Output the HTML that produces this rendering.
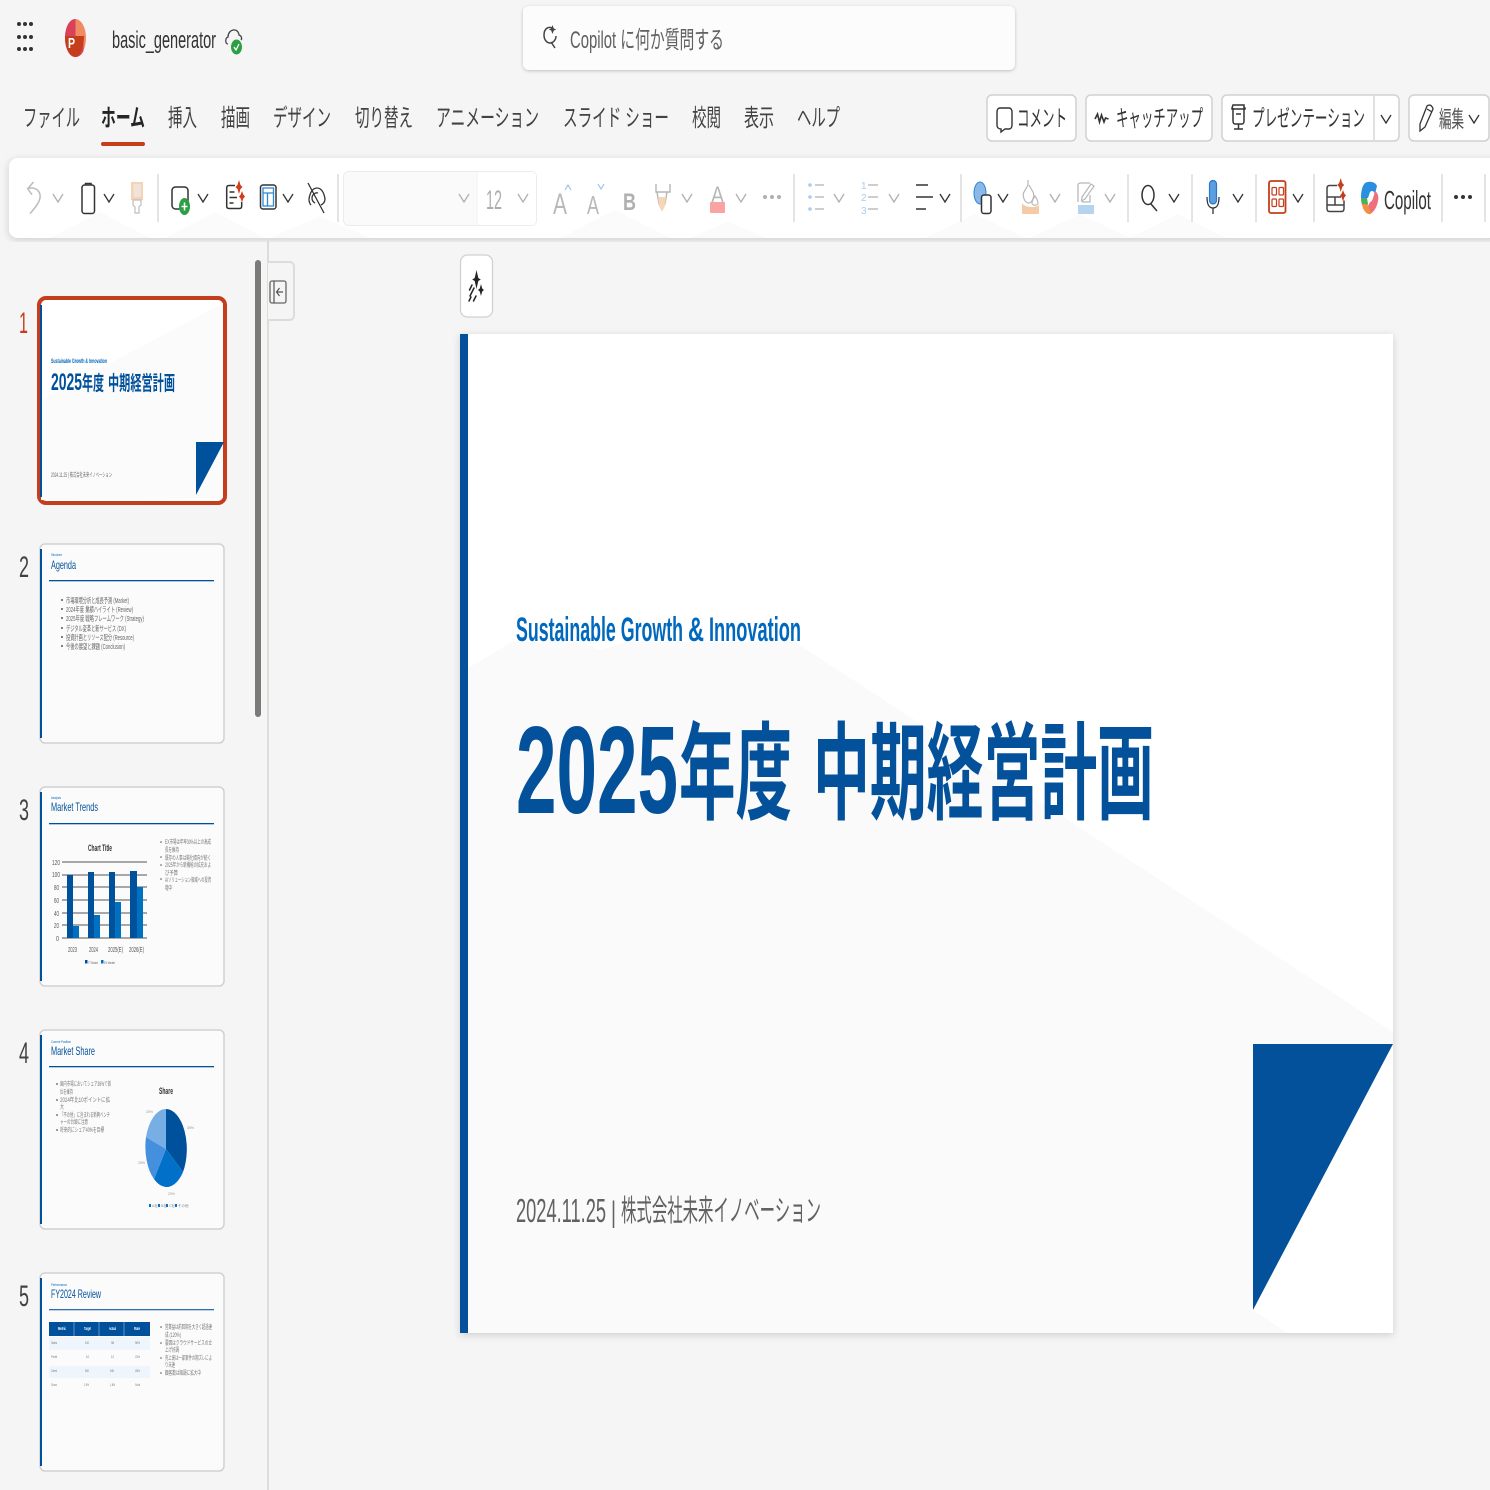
<!DOCTYPE html>
<html lang="ja"><head><meta charset="utf-8"><title>basic_generator</title>
<style>
html,body{margin:0;padding:0;background:#f5f5f5;width:1490px;height:1490px;overflow:hidden}
svg{display:block}
text{font-family:"Liberation Sans","Noto Sans CJK JP",sans-serif}
</style></head><body>
<svg xmlns="http://www.w3.org/2000/svg" width="1490" height="1490" viewBox="0 0 1490 1490">
<defs>
<filter id="sh" x="-5%" y="-5%" width="110%" height="110%"><feDropShadow dx="0" dy="2" stdDeviation="4" flood-color="#000" flood-opacity=".16"/></filter>
<filter id="sh2" x="-5%" y="-30%" width="110%" height="160%"><feDropShadow dx="0" dy="1" stdDeviation="1.5" flood-color="#000" flood-opacity=".22"/></filter>
<filter id="b" filterUnits="userSpaceOnUse" x="0" y="285" width="250" height="1205"><feGaussianBlur stdDeviation=".3"/></filter>
<polyline id="c" points="0,-4 5,4 10,-4" fill="none" stroke-width="1.300"/>
</defs>
<rect width="1490" height="1490" fill="#f5f5f5"/>

<!-- top bar -->
<g fill="#333"><circle cx="19" cy="24" r="2"/><circle cx="25" cy="24" r="2"/><circle cx="31" cy="24" r="2"/><circle cx="19" cy="37" r="2"/><circle cx="25" cy="37" r="2"/><circle cx="31" cy="37" r="2"/><circle cx="19" cy="49" r="2"/><circle cx="25" cy="49" r="2"/><circle cx="31" cy="49" r="2"/></g>
<ellipse cx="75.500" cy="38" rx="10.500" ry="19" fill="#ef8a62"/>
<path d="M75.500 19C69 19 65 28 65 38c0 10 4 19 10.500 19 3.500 0 6-2 8-6V38H75.500z" fill="#d9405a"/>
<path d="M65 36h19c0 8-3 21-8.500 21C69 57 65 47 65 36z" fill="#c43e1c"/>
<text x="68" y="48" font-size="15" font-weight="700" fill="#fff" textLength="7" lengthAdjust="spacingAndGlyphs">P</text>
<text x="112" y="48" font-size="24" fill="#333" textLength="104" lengthAdjust="spacingAndGlyphs">basic_generator</text>
<path d="M228 44c-3 0-3-6 0-7 0-8 10-10 11-2 3 1 3 4 2 5" fill="none" stroke="#444" stroke-width="1.300"/>
<ellipse cx="236.500" cy="47" rx="5.500" ry="7.500" fill="#2e9e44"/><path d="M234 47l2 3 3-6" fill="none" stroke="#fff" stroke-width="1.300"/>

<rect x="523" y="6" width="492" height="64" rx="6" fill="#fcfcfc" filter="url(#sh2)"/>
<path d="M552 28c-4-2-8 1-8 7 0 5 3 8 6 8 3 0 6-3 6-7M551 42l4 6" fill="none" stroke="#444" stroke-width="1.500"/>
<path d="M552.500 25l1.300 3.500 2.500 1-2.500 1-1.300 3.500-1.300-3.500-2.500-1 2.500-1z" fill="#444"/>
<text x="570" y="48" font-size="24" fill="#616161" textLength="154" lengthAdjust="spacingAndGlyphs">Copilot に何か質問する</text>

<!-- tabs -->
<g font-size="24" fill="#424242">
<text x="23" y="126" textLength="57" lengthAdjust="spacingAndGlyphs">ファイル</text>
<text x="101" y="126" font-weight="700" fill="#242424" textLength="44" lengthAdjust="spacingAndGlyphs">ホーム</text>
<text x="168" y="126" textLength="29" lengthAdjust="spacingAndGlyphs">挿入</text>
<text x="221" y="126" textLength="29" lengthAdjust="spacingAndGlyphs">描画</text>
<text x="273" y="126" textLength="58" lengthAdjust="spacingAndGlyphs">デザイン</text>
<text x="355" y="126" textLength="58" lengthAdjust="spacingAndGlyphs">切り替え</text>
<text x="436" y="126" textLength="103" lengthAdjust="spacingAndGlyphs">アニメーション</text>
<text x="563" y="126" textLength="106" lengthAdjust="spacingAndGlyphs">スライド ショー</text>
<text x="692" y="126" textLength="29" lengthAdjust="spacingAndGlyphs">校閲</text>
<text x="744" y="126" textLength="30" lengthAdjust="spacingAndGlyphs">表示</text>
<text x="797" y="126" textLength="43" lengthAdjust="spacingAndGlyphs">ヘルプ</text>
</g>
<rect x="101" y="142" width="44" height="4" rx="2" fill="#c43e1c"/>

<!-- right buttons -->
<g fill="#fff" stroke="#d1d1d1" stroke-width="1.500">
<rect x="987" y="95" width="89" height="46" rx="5"/>
<rect x="1086" y="95" width="126" height="46" rx="5"/>
<rect x="1222" y="95" width="177" height="46" rx="5"/>
<rect x="1409" y="95" width="80" height="46" rx="5"/>
</g>
<line x1="1374" y1="96" x2="1374" y2="140" stroke="#d1d1d1" stroke-width="1.300"/>
<path d="M1000 108h9c2 0 3 2 3 4v13c0 2-1 4-3 4h-4l-4 3v-3c-2 0-4-1-4-4v-13c0-2 1-4 3-4z" fill="none" stroke="#333" stroke-width="1.400"/>
<text x="1017" y="126" font-size="23" fill="#333" textLength="50" lengthAdjust="spacingAndGlyphs">コメント</text>
<path d="M1095 119l2.500-5 2 8 2-7 2.500 7 1.500-4 3 1" fill="none" stroke="#333" stroke-width="1.600"/>
<text x="1116" y="126" font-size="23" fill="#333" textLength="87" lengthAdjust="spacingAndGlyphs">キャッチアップ</text>
<path d="M1233 105h11v3h1v1h-13v-1zM1233 108v13c0 2 1 3 2 3h7c1 0 2-1 2-3v-13M1238.500 124v5M1234 129h9M1236 114h5" fill="none" stroke="#333" stroke-width="1.500"/>
<text x="1252" y="126" font-size="23" fill="#333" textLength="113" lengthAdjust="spacingAndGlyphs">プレゼンテーション</text>
<use href="#c" x="1381" y="119" stroke="#333"/>
<path d="M1430 105c2 1 3 3 3 4l-8 18-5 4 0-7 7-18c1-1 2-1 3-1zM1427 109l5 3" fill="none" stroke="#333" stroke-width="1.300"/>
<text x="1439" y="127" font-size="23" fill="#555" textLength="25" lengthAdjust="spacingAndGlyphs">編集</text>
<use href="#c" x="1469" y="119" stroke="#333"/>

<!-- ribbon -->
<rect x="9" y="158" width="1495" height="80" rx="9" fill="#fff" filter="url(#sh)"/>
<g fill="#fbfbfb">
<path d="M50 238l50-26 50 26zM165 238l50-26 50 26zM270 238l50-22 50 22zM560 238l55-28 55 28zM690 238l38-16 38 16zM925 238l50-24 50 24zM1030 238l50-24 50 24zM1130 238l48-24 48 24z"/>
</g>
<g stroke="#d6d6d6" stroke-width="1.300">
<line x1="158" y1="174" x2="158" y2="222"/><line x1="338" y1="174" x2="338" y2="222"/><line x1="794" y1="174" x2="794" y2="222"/><line x1="961" y1="174" x2="961" y2="222"/><line x1="1128" y1="174" x2="1128" y2="222"/><line x1="1192" y1="174" x2="1192" y2="222"/><line x1="1256" y1="174" x2="1256" y2="222"/><line x1="1314" y1="174" x2="1314" y2="222"/><line x1="1442" y1="174" x2="1442" y2="222"/><line x1="1485" y1="174" x2="1485" y2="222"/>
</g>
<g stroke="#b0b0b0"><use href="#c" x="53" y="198"/><use href="#c" x="682" y="198"/><use href="#c" x="736" y="198"/><use href="#c" x="834" y="198"/><use href="#c" x="889" y="198"/><use href="#c" x="1050" y="198"/><use href="#c" x="1105" y="198"/></g>
<g stroke="#333"><use href="#c" x="104" y="198"/><use href="#c" x="198" y="198"/><use href="#c" x="283" y="198"/><use href="#c" x="940" y="198"/><use href="#c" x="998" y="198"/><use href="#c" x="1169" y="198"/><use href="#c" x="1233" y="198"/><use href="#c" x="1293" y="198"/></g>

<!-- undo -->
<path d="M33.500 182L27.700 188.700L32 194.700M27.700 188.700C36 186 41 192 40 198C39 204 33 210 30 213.700" fill="none" stroke="#bdbdbd" stroke-width="1.500"/>
<!-- clipboard -->
<rect x="82" y="185" width="12.500" height="28.500" rx="2.500" fill="none" stroke="#333" stroke-width="1.500"/>
<path d="M85.500 185v-1.500h5.500v1.500" fill="none" stroke="#333" stroke-width="1.500"/>
<!-- brush -->
<rect x="131" y="182" width="12" height="18" fill="#f5d3b3"/><rect x="133.500" y="184" width="7.500" height="13" fill="#eee4dc"/>
<path d="M133 200h8v5l-2 2v6h-4v-6l-2-2z" fill="#fff" stroke="#bdbdbd" stroke-width="1.200"/>
<!-- new slide -->
<rect x="172" y="187" width="16" height="22" rx="3.500" fill="none" stroke="#333" stroke-width="1.500"/>
<ellipse cx="184.500" cy="206.500" rx="5.500" ry="8.500" fill="#2e9e44"/><path d="M184.500 202.500v8M181.500 206.500h6" stroke="#fff" stroke-width="1.500"/>
<!-- design -->
<path d="M235 185.500h-6c-1.500 0-2.300 1-2.300 2.500v18c0 1.500.8 2.500 2.300 2.500h10.500c1.500 0 2.200-1 2.200-2.500v-4M229.500 192h5M229.500 197.500h7.500M229.500 203h4" fill="none" stroke="#333" stroke-width="1.500"/>
<path d="M239 180l1.500 5 2 2-2 2-1.500 5-1.500-5-2-2 2-2zM242 191l1.300 3.500 1.700 2-1.700 2-1.300 4-1.300-4-1.700-2 1.700-2z" fill="#d13c1c"/>
<!-- layout -->
<rect x="260.500" y="185" width="15.500" height="24" rx="2.500" fill="none" stroke="#333" stroke-width="1.500"/>
<path d="M263 188h10.500v18h-10.500zM263 193h10.500M267.500 193v13" fill="none" stroke="#2b88d8" stroke-width="1.300"/>
<!-- hide -->
<path d="M309 199c1-7 4-11 8-11s7 4 8 11c0 3-2 5-4 6M311 205c-1-1-2-3-2-6M318 193c-3-1-6 2-6 5 0 2 1 4 3 5" fill="none" stroke="#333" stroke-width="1.300"/><line x1="308" y1="183" x2="324" y2="213" stroke="#333" stroke-width="1.300"/>

<!-- font box -->
<rect x="343.500" y="171.500" width="193" height="54" rx="5" fill="#fafafa" stroke="#ececec"/>
<rect x="477" y="172" width="59" height="53" rx="4" fill="#fff"/><line x1="477" y1="172" x2="477" y2="225" stroke="#f1f1f1"/>
<text x="486" y="209" font-size="27" fill="#adadad" textLength="16" lengthAdjust="spacingAndGlyphs">12</text>
<use href="#c" x="459" y="198" stroke="#b0b0b0"/>
<use href="#c" x="518" y="198" stroke="#b0b0b0"/>
<text x="553" y="214" font-size="30" fill="#b8b8b8" textLength="14" lengthAdjust="spacingAndGlyphs">A</text>
<path d="M565 190l3-5 3 5" fill="none" stroke="#9cc4ea" stroke-width="1.200"/>
<text x="587" y="214" font-size="26" fill="#b8b8b8" textLength="12" lengthAdjust="spacingAndGlyphs">A</text>
<path d="M598 184l3 5 3-5" fill="none" stroke="#9cc4ea" stroke-width="1.200"/>
<text x="623" y="210" font-size="24" font-weight="700" fill="#b0b0b0" textLength="13" lengthAdjust="spacingAndGlyphs">B</text>
<path d="M656 184v8h14v-8M657 192l2 12h6l2-12" fill="none" stroke="#b5b5b5" stroke-width="1.400"/>
<path d="M658 197h8l-1 9-3 6-3-6z" fill="#f6d6b8"/>
<text x="711" y="203" font-size="24" fill="#b8b8b8" textLength="13" lengthAdjust="spacingAndGlyphs">A</text>
<rect x="710" y="202" width="15" height="11" rx="1" fill="#f9a3a3"/>
<g fill="#b0b0b0"><circle cx="765" cy="197" r="2"/><circle cx="772" cy="197" r="2"/><circle cx="779" cy="197" r="2"/></g>

<!-- lists -->
<g fill="#a9cdf0"><circle cx="810" cy="185" r="1.800"/><circle cx="810" cy="197" r="1.800"/><circle cx="810" cy="209" r="1.800"/></g>
<path d="M815 185h9M815 197h9M815 209h9" stroke="#bdbdbd" stroke-width="1.500"/>
<text x="861" y="189" font-size="10" fill="#a9cdf0">1</text><text x="861" y="201" font-size="10" fill="#a9cdf0">2</text><text x="861" y="214" font-size="10" fill="#a9cdf0">3</text>
<path d="M868 185h10M868 197h10M868 209h10" stroke="#bdbdbd" stroke-width="1.500"/>
<path d="M916 185h12M916 197h17M916 209h10" stroke="#333" stroke-width="1.500"/>

<!-- shapes -->
<ellipse cx="980" cy="193" rx="6" ry="11" fill="#8ab8e8" stroke="#2b88d8" stroke-width="1"/>
<rect x="981.500" y="195" width="9.500" height="18.500" rx="2.500" fill="#fff" stroke="#333" stroke-width="1.500"/>
<!-- fill -->
<path d="M1028 180v5l-4.500 8c-1 5 2 10 5 10s6-5 5-10l-4.500-8M1035 196c-2 3-3 5-3 7 0 3 6 3 6 0 0-2-1-4-3-7z" fill="none" stroke="#b8b8b8" stroke-width="1.200"/>
<path d="M1022 203c3 5 14 5 17 2v8c0 1-1 1-2 1h-13c-1 0-2 0-2-1z" fill="#f5cba7"/>
<!-- outline -->
<path d="M1090 183h-10c-1 0-2 1-2 2v17M1090 195v7h-8" fill="none" stroke="#b8b8b8" stroke-width="1.300"/><path d="M1091 184l3 2-9 13-3.500 2 .5-4z" fill="none" stroke="#b8b8b8" stroke-width="1.200"/>
<rect x="1078" y="205" width="16" height="9" fill="#b6d3ef"/>
<!-- search -->
<ellipse cx="1148" cy="195" rx="6" ry="9.500" fill="none" stroke="#333" stroke-width="1.500"/><line x1="1151" y1="204" x2="1157" y2="211" stroke="#333" stroke-width="1.500"/>
<!-- mic -->
<rect x="1209.500" y="180.500" width="7" height="23.500" rx="3.500" fill="#5b9fe0" stroke="#2b78c8" stroke-width="1.200"/>
<path d="M1207 197c0 8 2 11 6 11s6-3 6-11M1213 208v6" fill="none" stroke="#333" stroke-width="1.300"/>
<!-- red grid -->
<rect x="1269" y="181" width="16.500" height="32" rx="2" fill="none" stroke="#c43e1c" stroke-width="1.800"/>
<g fill="none" stroke="#c43e1c" stroke-width="1.200"><rect x="1272" y="187.500" width="4.500" height="7.500" rx="1"/><rect x="1279" y="187.500" width="4.500" height="7.500" rx="1"/><rect x="1272" y="199" width="4.500" height="7.500" rx="1"/><rect x="1279" y="199" width="4.500" height="7.500" rx="1"/></g>
<!-- designer -->
<path d="M1337 185.500h-7.500c-1.500 0-2.500 1-2.500 3v20c0 2 1 3 2.500 3h12c1.500 0 2.500-1 2.500-3v-8M1327 197h14M1335 197v8M1327 205h17" fill="none" stroke="#444" stroke-width="1.500"/>
<path d="M1340.700 178l1.500 5 2 2-2 2-1.500 5-1.500-5-2-2 2-2zM1343 190l1.300 3.500 1.700 2-1.700 2-1.300 4-1.300-4-1.700-2 1.700-2z" fill="#c43e1c"/>
<!-- copilot logo -->
<path d="M1365 183c3-2 10-2 12 3l-2 8c-1-3-3-4-5-2l-2 6h-7c0-6 1-12 4-15z" fill="#2b8fe0"/>
<path d="M1361 198h6l1 6-2 6c-3-2-5-6-5-12z" fill="#4eae5a"/>
<path d="M1375 191c3 2 4 6 3 10-1 6-4 11-8 13l-4-4 4-8c2 0 3-3 5-11z" fill="#ef6f7c"/>
<path d="M1362 204l4 0 3 3 2 7c-4 1-8-3-9-10z" fill="#f4903c"/>
<text x="1384" y="209" font-size="26" fill="#333" textLength="47" lengthAdjust="spacingAndGlyphs">Copilot</text>
<g fill="#333"><circle cx="1456" cy="197" r="2"/><circle cx="1463" cy="197" r="2"/><circle cx="1470" cy="197" r="2"/></g>

<!-- panel dividers -->
<line x1="268" y1="238" x2="268" y2="1490" stroke="#dcdcdc" stroke-width="2"/>
<rect x="255" y="260" width="6" height="457" rx="3" fill="#7c7a78"/>
<path d="M268 262h21c3 0 5 2 5 5v48c0 3-2 5-5 5h-21" fill="#f5f5f5" stroke="#dcdcdc" stroke-width="2"/>
<rect x="270" y="281" width="16" height="22" rx="2" fill="none" stroke="#666" stroke-width="1.300"/>
<path d="M274 281v22M283 292h-6M279.500 288l-3 4 3 4" fill="none" stroke="#555" stroke-width="1.200"/>

<!-- sparkle button -->
<rect x="460.500" y="255" width="32" height="62" rx="7" fill="#fff" stroke="#d1d1d1" stroke-width="1.300"/>
<path d="M476.500 270l1.800 8 2.500 1.500-2.500 1.500-1.800 8-1.800-8-2.500-1.500 2.500-1.500zM481 284l1.200 4.500 1.800 1.500-1.800 1.500-1.200 4.500-1.200-4.500-1.800-1.500 1.800-1.500z" fill="#242424"/>
<path d="M472 285l-2.500 5M474 288l-4 8M471 297l-2 4M476 296l-2.500 5" stroke="#242424" stroke-width="1.500" stroke-linecap="round"/>

<!-- main slide -->
<rect x="460" y="334" width="933" height="999" fill="#fff" filter="url(#sh)"/>
<path d="M468 668L512 642L580 642L600 650L625 642L795 642L1393 1032V1044H1253V1310L1287 1333H468z" fill="#fafafa"/>
<path d="M1253 1044H1393L1253 1310z" fill="#03519b"/>
<rect x="460" y="334" width="8" height="999" fill="#03519b"/>
<g font-size="34" font-weight="700" fill="#0068bd">
<text x="516" y="641" textLength="167" lengthAdjust="spacingAndGlyphs">Sustainable Growth</text>
<text x="688" y="641" textLength="16" lengthAdjust="spacingAndGlyphs">&amp;</text>
<text x="709" y="641" textLength="92" lengthAdjust="spacingAndGlyphs">Innovation</text>
</g>
<g font-weight="700" fill="#03519b">
<text x="516" y="813" font-size="124" textLength="162" lengthAdjust="spacingAndGlyphs">2025</text>
<text x="679" y="811" font-size="106" textLength="113" lengthAdjust="spacingAndGlyphs">年度</text>
<text x="813" y="811" font-size="106" textLength="341" lengthAdjust="spacingAndGlyphs">中期経営計画</text>
</g>
<g fill="#616161">
<text x="516" y="1222" font-size="33" textLength="90" lengthAdjust="spacingAndGlyphs">2024.11.25</text>
<text x="611" y="1222" font-size="30" textLength="5" lengthAdjust="spacingAndGlyphs">|</text>
<text x="621" y="1221" font-size="30" textLength="200" lengthAdjust="spacingAndGlyphs">株式会社未来イノベーション</text>
</g>

<!-- numbers -->
<g font-size="30" fill="#424242">
<text x="19" y="333" fill="#c43e1c" textLength="9" lengthAdjust="spacingAndGlyphs">1</text>
<text x="19" y="577" textLength="10" lengthAdjust="spacingAndGlyphs">2</text>
<text x="19" y="820" textLength="10" lengthAdjust="spacingAndGlyphs">3</text>
<text x="19" y="1063" textLength="10" lengthAdjust="spacingAndGlyphs">4</text>
<text x="19" y="1306" textLength="10" lengthAdjust="spacingAndGlyphs">5</text>
</g>

<g filter="url(#b)">
<!-- thumb 1 -->
<rect x="39" y="298" width="186" height="205" rx="7" fill="#fff" stroke="#c43e1c" stroke-width="4"/>
<path d="M41 400L223 303V498L41 500z" fill="#fbfbfb"/>
<rect x="40" y="305" width="2" height="192" fill="#03519b"/>
<path d="M196 442H224L196 495z" fill="#03519b"/>
<text x="51" y="363" font-size="6.500" font-weight="700" fill="#0068bd" textLength="56" lengthAdjust="spacingAndGlyphs">Sustainable Growth &amp; Innovation</text>
<g font-weight="700" fill="#03519b">
<text x="51" y="390" font-size="24" textLength="31" lengthAdjust="spacingAndGlyphs">2025</text>
<text x="82" y="390" font-size="20" textLength="22" lengthAdjust="spacingAndGlyphs">年度</text>
<text x="108" y="390" font-size="20" textLength="67" lengthAdjust="spacingAndGlyphs">中期経営計画</text>
</g>
<text x="51" y="477" font-size="6" fill="#666" textLength="61" lengthAdjust="spacingAndGlyphs">2024.11.25 | 株式会社未来イノベーション</text>

<!-- thumb 2 -->
<rect x="40" y="544" width="184" height="199" rx="5" fill="#fbfbfb" stroke="#d1d1d1" stroke-width="1.500"/>
<rect x="40" y="549" width="2" height="189" fill="#03519b"/>
<text x="51" y="556" font-size="4" fill="#0068bd" textLength="11" lengthAdjust="spacingAndGlyphs">Structure</text>
<text x="51" y="569" font-size="12" fill="#03519b" textLength="25" lengthAdjust="spacingAndGlyphs">Agenda</text>
<rect x="49" y="580" width="165" height="1.300" fill="#03519b"/>
<g fill="#555"><circle cx="62" cy="600" r="1"/><circle cx="62" cy="609" r="1"/><circle cx="62" cy="618" r="1"/><circle cx="62" cy="628" r="1"/><circle cx="62" cy="637" r="1"/><circle cx="62" cy="646" r="1"/></g>
<g font-size="7.500" fill="#666">
<text x="66" y="603" textLength="63" lengthAdjust="spacingAndGlyphs">市場環境分析と成長予測 (Market)</text>
<text x="66" y="612" textLength="67" lengthAdjust="spacingAndGlyphs">2024年度 業績ハイライト (Review)</text>
<text x="66" y="621" textLength="78" lengthAdjust="spacingAndGlyphs">2025年度 戦略フレームワーク (Strategy)</text>
<text x="66" y="631" textLength="60" lengthAdjust="spacingAndGlyphs">デジタル変革と新サービス (DX)</text>
<text x="66" y="640" textLength="68" lengthAdjust="spacingAndGlyphs">投資計画とリソース配分 (Resource)</text>
<text x="66" y="649" textLength="59" lengthAdjust="spacingAndGlyphs">今後の展望と課題 (Conclusion)</text>
</g>

<!-- thumb 3 -->
<rect x="40" y="787" width="184" height="199" rx="5" fill="#fbfbfb" stroke="#d1d1d1" stroke-width="1.500"/>
<rect x="40" y="792" width="2" height="189" fill="#03519b"/>
<text x="51" y="799" font-size="4" fill="#0068bd" textLength="10" lengthAdjust="spacingAndGlyphs">Analysis</text>
<text x="51" y="811" font-size="12" fill="#03519b" textLength="47" lengthAdjust="spacingAndGlyphs">Market Trends</text>
<rect x="49" y="823" width="165" height="1.300" fill="#03519b"/>
<text x="88" y="851" font-size="9" font-weight="700" fill="#333" textLength="24" lengthAdjust="spacingAndGlyphs">Chart Title</text>
<g stroke="#555" stroke-width=".9"><line x1="62" y1="862" x2="147" y2="862"/><line x1="62" y1="875" x2="147" y2="875"/><line x1="62" y1="887" x2="147" y2="887"/><line x1="62" y1="900" x2="147" y2="900"/><line x1="62" y1="913" x2="147" y2="913"/><line x1="62" y1="925" x2="147" y2="925"/><line x1="62" y1="938" x2="147" y2="938"/></g>
<g fill="#03519b"><rect x="67" y="875" width="6" height="63"/><rect x="88" y="872" width="6" height="66"/><rect x="109" y="872" width="6" height="66"/><rect x="130" y="871" width="7" height="67"/></g>
<g fill="#0070c0"><rect x="73" y="926" width="6" height="12"/><rect x="94" y="915" width="6" height="23"/><rect x="115" y="902" width="6" height="36"/><rect x="137" y="887" width="6" height="51"/></g>
<g font-size="7" fill="#555">
<text x="52" y="865" textLength="8" lengthAdjust="spacingAndGlyphs">120</text><text x="52" y="877" textLength="8" lengthAdjust="spacingAndGlyphs">100</text><text x="54" y="890" textLength="5" lengthAdjust="spacingAndGlyphs">80</text><text x="54" y="903" textLength="5" lengthAdjust="spacingAndGlyphs">60</text><text x="54" y="916" textLength="5" lengthAdjust="spacingAndGlyphs">40</text><text x="54" y="928" textLength="5" lengthAdjust="spacingAndGlyphs">20</text><text x="56" y="941" textLength="3" lengthAdjust="spacingAndGlyphs">0</text>
<text x="68" y="952" textLength="9" lengthAdjust="spacingAndGlyphs">2023</text><text x="89" y="952" textLength="9" lengthAdjust="spacingAndGlyphs">2024</text><text x="108" y="952" textLength="15" lengthAdjust="spacingAndGlyphs">2025(E)</text><text x="129" y="952" textLength="15" lengthAdjust="spacingAndGlyphs">2026(E)</text>
</g>
<rect x="85" y="960" width="2.500" height="3.500" fill="#03519b"/><rect x="101" y="960" width="2.500" height="3.500" fill="#0070c0"/>
<text x="88" y="964" font-size="3.500" fill="#666" textLength="10" lengthAdjust="spacingAndGlyphs">TT Market</text><text x="104" y="964" font-size="3.500" fill="#666" textLength="11" lengthAdjust="spacingAndGlyphs">EX Market</text>
<g fill="#555"><circle cx="161" cy="842" r=".8"/><circle cx="161" cy="857" r=".8"/><circle cx="161" cy="865" r=".8"/><circle cx="161" cy="879" r=".8"/></g>
<g font-size="6" fill="#777">
<text x="165" y="844" textLength="46" lengthAdjust="spacingAndGlyphs">EX市場は年率30%以上の高成</text>
<text x="165" y="852" textLength="14" lengthAdjust="spacingAndGlyphs">長を維持</text>
<text x="165" y="860" textLength="46" lengthAdjust="spacingAndGlyphs">既存の人事は鈍化傾向が続く</text>
<text x="165" y="867" textLength="46" lengthAdjust="spacingAndGlyphs">2025年から新機能の拡充およ</text>
<text x="165" y="875" textLength="13" lengthAdjust="spacingAndGlyphs">び予算</text>
<text x="165" y="882" textLength="46" lengthAdjust="spacingAndGlyphs">AIソリューション領域への投資</text>
<text x="165" y="890" textLength="7" lengthAdjust="spacingAndGlyphs">増中</text>
</g>

<!-- thumb 4 -->
<rect x="40" y="1030" width="184" height="199" rx="5" fill="#fbfbfb" stroke="#d1d1d1" stroke-width="1.500"/>
<rect x="40" y="1035" width="2" height="189" fill="#03519b"/>
<text x="51" y="1043" font-size="4" fill="#0068bd" textLength="20" lengthAdjust="spacingAndGlyphs">Current Position</text>
<text x="51" y="1055" font-size="12" fill="#03519b" textLength="44" lengthAdjust="spacingAndGlyphs">Market Share</text>
<rect x="49" y="1066" width="165" height="1.300" fill="#03519b"/>
<g fill="#555"><circle cx="57" cy="1084" r=".9"/><circle cx="57" cy="1100" r=".9"/><circle cx="57" cy="1115" r=".9"/><circle cx="57" cy="1130" r=".9"/></g>
<g font-size="6" fill="#777">
<text x="60" y="1086" textLength="51" lengthAdjust="spacingAndGlyphs">国内市場においてシェア38%で首</text>
<text x="60" y="1094" textLength="13" lengthAdjust="spacingAndGlyphs">位を維持</text>
<text x="60" y="1102" textLength="50" lengthAdjust="spacingAndGlyphs">2024年比10ポイントに拡</text>
<text x="60" y="1109" textLength="4" lengthAdjust="spacingAndGlyphs">大</text>
<text x="60" y="1117" textLength="50" lengthAdjust="spacingAndGlyphs">「不の他」に含まれる新興ベンチ</text>
<text x="60" y="1124" textLength="28" lengthAdjust="spacingAndGlyphs">ャーの台頭に注意</text>
<text x="60" y="1132" textLength="44" lengthAdjust="spacingAndGlyphs">将来的にシェア40%を目標</text>
</g>
<text x="159" y="1094" font-size="9" font-weight="700" fill="#333" textLength="14" lengthAdjust="spacingAndGlyphs">Share</text>
<path d="M166 1149V1109A21 40 0 0 1 183 1172z" fill="#03519b"/>
<path d="M166 1149L183 1172A21 40 0 0 1 154 1179z" fill="#0070c8"/>
<path d="M166 1149L154 1179A21 40 0 0 1 146 1137z" fill="#4590de"/>
<path d="M166 1149L146 1137A21 40 0 0 1 166 1109z" fill="#77aee3"/>
<g font-size="3.500" fill="#999"><text x="146" y="1113">20%</text><text x="187" y="1129">35%</text><text x="138" y="1164">25%</text><text x="168" y="1195">20%</text></g>
<g fill="#0070c8"><rect x="149" y="1204" width="2" height="3"/><rect x="158" y="1204" width="2" height="3"/><rect x="166" y="1204" width="2" height="3"/><rect x="175" y="1204" width="2" height="3"/></g>
<g font-size="3.500" fill="#888"><text x="152" y="1207">A社</text><text x="161" y="1207">B社</text><text x="169" y="1207">C社</text><text x="178" y="1207">その他</text></g>

<!-- thumb 5 -->
<rect x="40" y="1273" width="184" height="198" rx="5" fill="#fbfbfb" stroke="#d1d1d1" stroke-width="1.500"/>
<rect x="40" y="1278" width="2" height="188" fill="#03519b"/>
<text x="51" y="1286" font-size="4" fill="#0068bd" textLength="16" lengthAdjust="spacingAndGlyphs">Performance</text>
<text x="51" y="1298" font-size="12" fill="#03519b" textLength="50" lengthAdjust="spacingAndGlyphs">FY2024 Review</text>
<rect x="49" y="1309" width="165" height="1.300" fill="#2e6db0"/>
<rect x="49" y="1322" width="101" height="14" fill="#03519b"/>
<path d="M74 1322v14M99 1322v14M124 1322v14" stroke="#9dbad8" stroke-width=".6"/>
<rect x="49" y="1337" width="101" height="13" fill="#eef5fd"/><rect x="49" y="1366" width="101" height="12" fill="#eef5fd"/>
<g font-size="4.500" fill="#fff" font-weight="700"><text x="58" y="1330" textLength="8" lengthAdjust="spacingAndGlyphs">Metric</text><text x="84" y="1330" textLength="7" lengthAdjust="spacingAndGlyphs">Target</text><text x="109" y="1330" textLength="7" lengthAdjust="spacingAndGlyphs">Actual</text><text x="134" y="1330" textLength="6" lengthAdjust="spacingAndGlyphs">Rate</text></g>
<g font-size="4" fill="#777">
<text x="51" y="1344" textLength="6" lengthAdjust="spacingAndGlyphs">Sales</text><text x="85" y="1344" textLength="4" lengthAdjust="spacingAndGlyphs">100</text><text x="111" y="1344" textLength="3" lengthAdjust="spacingAndGlyphs">98</text><text x="135" y="1344" textLength="5" lengthAdjust="spacingAndGlyphs">98%</text>
<text x="51" y="1358" textLength="6" lengthAdjust="spacingAndGlyphs">Profit</text><text x="86" y="1358" textLength="3" lengthAdjust="spacingAndGlyphs">10</text><text x="111" y="1358" textLength="3" lengthAdjust="spacingAndGlyphs">12</text><text x="135" y="1358" textLength="5" lengthAdjust="spacingAndGlyphs">120%</text>
<text x="51" y="1372" textLength="6" lengthAdjust="spacingAndGlyphs">Client</text><text x="85" y="1372" textLength="4" lengthAdjust="spacingAndGlyphs">500</text><text x="110" y="1372" textLength="4" lengthAdjust="spacingAndGlyphs">540</text><text x="135" y="1372" textLength="5" lengthAdjust="spacingAndGlyphs">108%</text>
<text x="51" y="1386" textLength="6" lengthAdjust="spacingAndGlyphs">Churn</text><text x="84" y="1386" textLength="5" lengthAdjust="spacingAndGlyphs">2.0%</text><text x="110" y="1386" textLength="5" lengthAdjust="spacingAndGlyphs">1.8%</text><text x="135" y="1386" textLength="5" lengthAdjust="spacingAndGlyphs">Good</text>
</g>
<g fill="#555"><circle cx="161" cy="1327" r=".8"/><circle cx="161" cy="1343" r=".8"/><circle cx="161" cy="1358" r=".8"/><circle cx="161" cy="1373" r=".8"/></g>
<g font-size="6" fill="#777">
<text x="165" y="1329" textLength="47" lengthAdjust="spacingAndGlyphs">営業益は前回期を大きく超過達</text>
<text x="165" y="1337" textLength="16" lengthAdjust="spacingAndGlyphs">成 (120%)</text>
<text x="165" y="1345" textLength="47" lengthAdjust="spacingAndGlyphs">要因はクラウドサービスの立</text>
<text x="165" y="1352" textLength="14" lengthAdjust="spacingAndGlyphs">上げ好調</text>
<text x="165" y="1360" textLength="47" lengthAdjust="spacingAndGlyphs">売上高は一部案件の期ズレによ</text>
<text x="165" y="1367" textLength="10" lengthAdjust="spacingAndGlyphs">り未達</text>
<text x="165" y="1375" textLength="36" lengthAdjust="spacingAndGlyphs">顧客数は順調に拡大中</text>
</g>
</g>
</svg>
</body></html>
